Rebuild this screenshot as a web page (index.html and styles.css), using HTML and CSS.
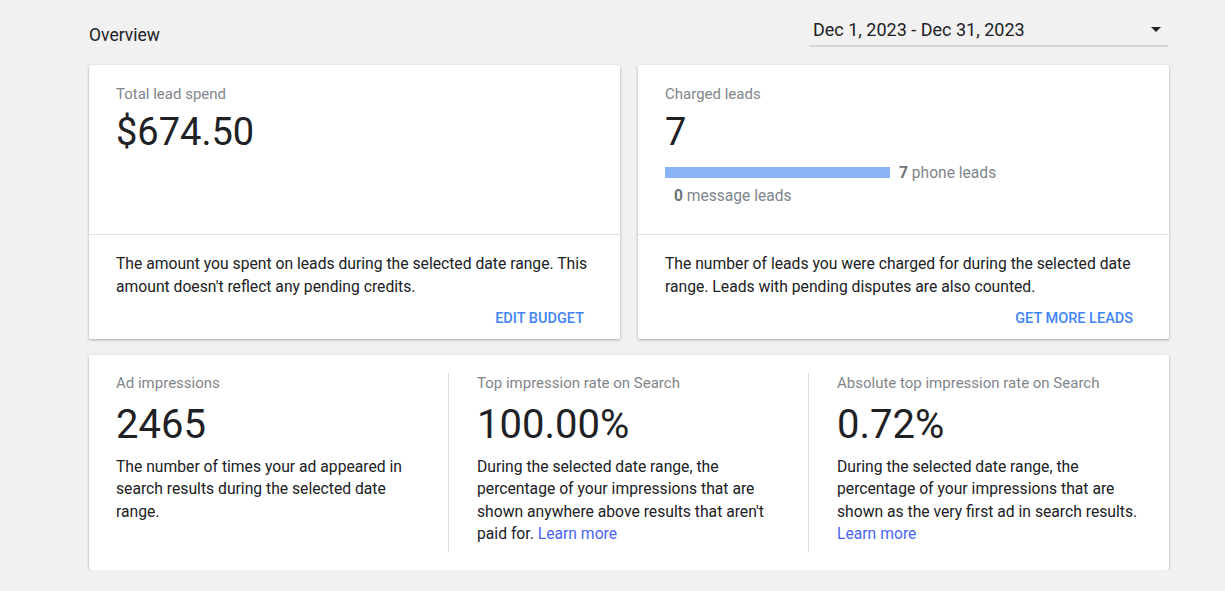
FILE: index.html
```html
<!DOCTYPE html>
<html lang="en">
<head>
    <meta charset="UTF-8">
    <title>Overview</title>
    <link rel="stylesheet" href="styles.css">
</head>
<body>
    <div class="page">
        <div class="header">
            <h1 class="title">Overview</h1>
            <div class="date-select">
                <span>Dec 1, 2023 - Dec 31, 2023</span>
                <span class="arrow"></span>
            </div>
        </div>

        <div class="top-cards">
            <div class="card">
                <div class="card-main">
                    <div class="label">Total lead spend</div>
                    <div class="value">$674.50</div>
                </div>
                <div class="card-foot">
                    <p class="desc">The amount you spent on leads during the selected date range. This amount doesn't reflect any pending credits.</p>
                    <a class="action" href="#">Edit budget</a>
                </div>
            </div>

            <div class="card">
                <div class="card-main">
                    <div class="label">Charged leads</div>
                    <div class="value">7</div>
                    <div class="leads">
                        <div class="bar-row">
                            <div class="bar" style="width: 225px"></div>
                            <span class="bar-label"><b>7</b> phone leads</span>
                        </div>
                        <div class="bar-row">
                            <div class="bar" style="width: 0"></div>
                            <span class="bar-label"><b>0</b> message leads</span>
                        </div>
                    </div>
                </div>
                <div class="card-foot">
                    <p class="desc">The number of leads you were charged for during the selected date range. Leads with pending disputes are also counted.</p>
                    <a class="action" href="#">Get more leads</a>
                </div>
            </div>
        </div>

        <div class="card stats">
            <div class="stat">
                <div class="label">Ad impressions</div>
                <div class="stat-value">2465</div>
                <p class="desc">The number of times your ad appeared in search results during the selected date range.</p>
            </div>
            <div class="stat">
                <div class="label">Top impression rate on Search</div>
                <div class="stat-value">100.00%</div>
                <p class="desc">During the selected date range, the percentage of your impressions that are shown anywhere above results that aren't paid for. <a class="link" href="#">Learn more</a></p>
            </div>
            <div class="stat">
                <div class="label">Absolute top impression rate on Search</div>
                <div class="stat-value">0.72%</div>
                <p class="desc">During the selected date range, the percentage of your impressions that are shown as the very first ad in search results. <a class="link" href="#">Learn more</a></p>
            </div>
        </div>
    </div>
</body>
</html>
```

FILE: styles.css
```css
* {
    margin: 0;
    padding: 0;
    box-sizing: border-box;
}

body {
    background: #f1f1f1;
    font-family: Roboto, 'Liberation Sans', sans-serif;
    color: #202124;
}

.page {
    width: 1080px;
    margin-left: 89px;
    padding-top: 16px;
}

.header {
    display: flex;
    justify-content: space-between;
    margin-bottom: 18px;
}

.title {
    font-size: 17.5px;
    font-weight: 400;
    line-height: 20px;
    padding-top: 9px;
    color: #202124;
}

.date-select {
    width: 359px;
    margin-right: 1px;
    display: flex;
    align-items: center;
    justify-content: space-between;
    height: 31px;
    padding: 0 7px 2px 4px;
    border-bottom: 2px solid #d6d6d6;
    font-size: 18px;
    color: #202124;
}

.arrow {
    width: 0;
    height: 0;
    border-left: 5px solid transparent;
    border-right: 5px solid transparent;
    border-top: 5px solid #202124;
}

.top-cards {
    display: grid;
    grid-template-columns: 1fr 1fr;
    gap: 18px;
}

.card {
    background: #fff;
    border-radius: 2px;
    box-shadow: 0 1px 3px rgba(0, 0, 0, 0.3);
}

.card-main {
    height: 170px;
    padding: 19px 27px 0;
    border-bottom: 1px solid #e0e0e0;
}

.label {
    font-size: 15px;
    line-height: 20px;
    color: #80868b;
}

.value {
    font-size: 38px;
    line-height: 42px;
    margin-top: 7px;
}

.leads {
    margin-top: 8px;
}

.bar-row {
    display: flex;
    align-items: center;
    height: 23px;
}

.bar {
    height: 11px;
    flex-shrink: 0;
    background: #8ab4f8;
}

.bar-label {
    margin-left: 9px;
    font-size: 15.6px;
    color: #80868b;
}

.bar-label b {
    color: #6f7377;
}

.card-foot {
    padding: 18px 27px 10px;
}

.desc {
    font-size: 15.7px;
    line-height: 22.5px;
    color: #202124;
}

.action {
    display: block;
    text-align: right;
    margin: 11px 9px 0 0;
    font-size: 14.5px;
    font-weight: 500;
    line-height: 20px;
    text-transform: uppercase;
    text-decoration: none;
    color: #4285f4;
}

.stats {
    margin-top: 16px;
    display: grid;
    grid-template-columns: 359px 360px 361px;
    padding: 18px 0;
}

.stat {
    padding: 0 28px 0 27px;
    min-height: 179px;
}

.stat + .stat {
    border-left: 1px solid #dadce0;
    padding-left: 28px;
}

.stat .desc {
    line-height: 22.3px;
}

.stat-value {
    font-size: 40px;
    line-height: 44px;
    margin: 10px 0 9px;
}

.link {
    color: #4a66f5;
    text-decoration: none;
}
```
